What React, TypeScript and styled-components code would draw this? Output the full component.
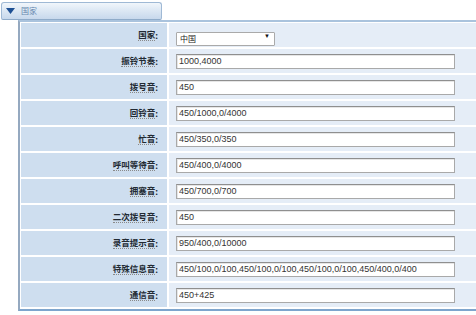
import React from "react";
import styled, { createGlobalStyle } from "styled-components";

const Global = createGlobalStyle`
  html, body { margin: 0; padding: 0; background: #ffffff; }
  body { font-family: "Liberation Sans", Arial, "Noto Sans CJK SC", sans-serif; }
  * { box-sizing: border-box; }
`;

const Page = styled.div`
  padding: 2px 0 0 1px;
  width: 476px;
  overflow: hidden;
`;

const Tab = styled.div`
  width: 161px;
  height: 18px;
  display: flex;
  align-items: center;
  gap: 6px;
  padding-left: 4px;
  border: 1px solid #9fb9d5;
  border-bottom-color: #8fabc9;
  border-radius: 3px 3px 2px 2px;
  background: linear-gradient(#f1f6fb 0%, #dde8f4 45%, #c7d8ec 100%);
`;

const TabLabel = styled.span`
  font-family: "Noto Sans CJK SC", sans-serif;
  font-size: 8px;
  color: #6486ad;
  line-height: 1;
`;

const Panel = styled.div`
  margin-left: 17px;
  border-top: 2px solid #aac3dd;
  border-left: 2px solid #95a9c0;
  border-bottom: 2px solid #7ea5cd;
  padding: 1px 0 2px 1px;
`;

const Grid = styled.div`
  display: grid;
  grid-template-columns: 146px 1fr;
  row-gap: 2px;
  column-gap: 2px;
`;

const LabelCell = styled.div`
  height: 24px;
  background: #cedeef;
  display: flex;
  align-items: center;
  justify-content: flex-end;
  padding-right: 9px;
  font-family: "Noto Sans CJK SC", sans-serif;
  font-weight: 700;
  font-size: 8.5px;
  color: #222a33;
`;

const Dotted = styled.span`
  border-bottom: 1px dotted #8a8a8a;
  line-height: 11px;
`;

const ValueCell = styled.div`
  height: 24px;
  background: #e5edf7;
  display: flex;
  align-items: center;
  padding-left: 7px;
`;

const Input = styled.input`
  width: 279px;
  height: 15px;
  border: 1px solid #a9a9a9;
  border-top-color: #8f8f8f;
  background: #ffffff;
  padding: 0 2px;
  font-family: "Liberation Sans", Arial, sans-serif;
  font-size: 9px;
  color: #333333;
  outline: none;
  box-shadow: inset 1px 1px 0 #e6e6e6;
`;

const SelectWrap = styled.span`
  position: relative;
  display: inline-block;
  width: 99px;
  height: 14px;
`;

const Select = styled.select`
  appearance: none;
  -webkit-appearance: none;
  width: 99px;
  height: 14px;
  border: 1px solid #aaaaaa;
  border-radius: 1px;
  background: #ffffff;
  padding: 0 0 0 3px;
  font-family: "Noto Sans CJK SC", sans-serif;
  font-size: 8px;
  line-height: 12px;
  color: #222222;
  outline: none;
`;

const Arrow = styled.span`
  position: absolute;
  right: 5px;
  top: 5px;
  font-size: 6px;
  line-height: 1;
  color: #111111;
  pointer-events: none;
`;

const rows: [string, string][] = [
  ["振铃节奏", "1000,4000"],
  ["拨号音", "450"],
  ["回铃音", "450/1000,0/4000"],
  ["忙音", "450/350,0/350"],
  ["呼叫等待音", "450/400,0/4000"],
  ["拥塞音", "450/700,0/700"],
  ["二次拨号音", "450"],
  ["录音提示音", "950/400,0/10000"],
  ["特殊信息音", "450/100,0/100,450/100,0/100,450/100,0/100,450/400,0/400"],
  ["通信音", "450+425"],
];

export default function App() {
  return (
    <Page>
      <Global />
      <Tab>
        <svg width="9" height="6" viewBox="0 0 9 6">
          <polygon points="0,0 9,0 4.5,6" fill="#1d4f93" />
        </svg>
        <TabLabel>国家</TabLabel>
      </Tab>
      <Panel>
        <Grid>
          <LabelCell>
            <Dotted>国家</Dotted>:
          </LabelCell>
          <ValueCell>
            <SelectWrap>
              <Select defaultValue="cn">
                <option value="cn">中国</option>
              </Select>
              <Arrow>▼</Arrow>
            </SelectWrap>
          </ValueCell>
          {rows.map(([label, value]) => (
            <React.Fragment key={label}>
              <LabelCell>
                <Dotted>{label}</Dotted>:
              </LabelCell>
              <ValueCell>
                <Input defaultValue={value} />
              </ValueCell>
            </React.Fragment>
          ))}
        </Grid>
      </Panel>
    </Page>
  );
}
